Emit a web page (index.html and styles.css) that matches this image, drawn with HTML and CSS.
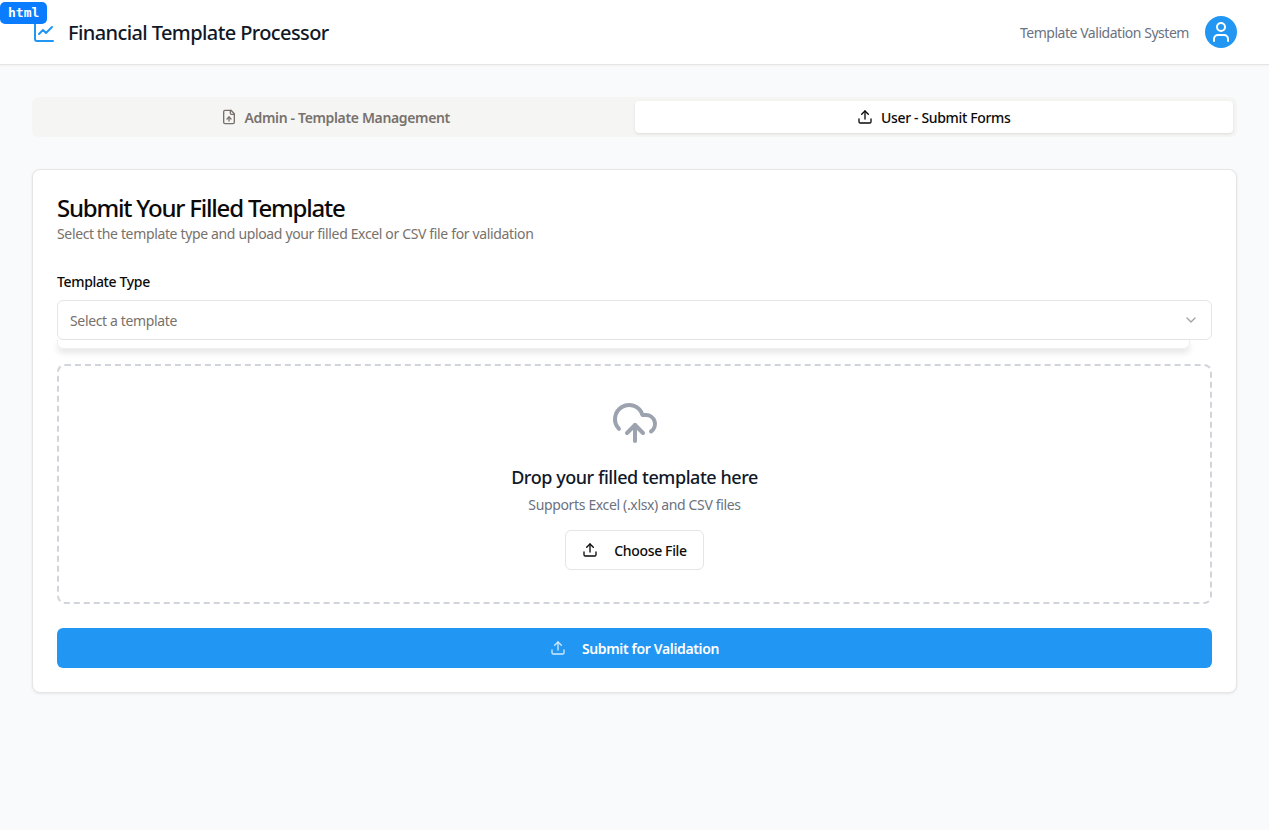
FILE: index.html
```html
<!DOCTYPE html>
<html lang="en">
<head>
  <meta charset="UTF-8" />
  <meta name="viewport" content="width=device-width, initial-scale=1" />
  <title>Financial Template Processor</title>
  <link rel="stylesheet" href="styles.css">
</head>
<body>
  <!-- Element badge left over the logo -->
  <div class="badge">html</div>

  <header class="topbar">
    <div class="brand">
      <svg class="brand-icon" viewBox="0 0 24 24" fill="none" stroke="currentColor" stroke-width="2" stroke-linecap="round" stroke-linejoin="round">
        <path d="M3 3v16a2 2 0 0 0 2 2h16"/>
        <path d="m7 14 4-4 3 3 6-6"/>
      </svg>
      <h1 class="brand-title">Financial Template Processor</h1>
    </div>
    <div class="topbar-right">
      <span class="system-name">Template Validation System</span>
      <div class="avatar">
        <svg viewBox="0 0 24 24" fill="none" stroke="currentColor" stroke-width="2" stroke-linecap="round" stroke-linejoin="round">
          <path d="M19 21v-2a4 4 0 0 0-4-4H9a4 4 0 0 0-4 4v2"/>
          <circle cx="12" cy="7" r="4"/>
        </svg>
      </div>
    </div>
  </header>

  <main class="content">
    <!-- Tabs -->
    <div class="tabs">
      <button class="tab">
        <svg class="icon" viewBox="0 0 24 24" fill="none" stroke="currentColor" stroke-width="2" stroke-linecap="round" stroke-linejoin="round">
          <path d="M15 2H6a2 2 0 0 0-2 2v16a2 2 0 0 0 2 2h12a2 2 0 0 0 2-2V7Z"/>
          <path d="M14 2v4a2 2 0 0 0 2 2h4"/>
          <path d="M12 12v6"/>
          <path d="m15 15-3-3-3 3"/>
        </svg>
        Admin - Template Management
      </button>
      <button class="tab tab-active">
        <svg class="icon" viewBox="0 0 24 24" fill="none" stroke="currentColor" stroke-width="2" stroke-linecap="round" stroke-linejoin="round">
          <path d="M21 15v4a2 2 0 0 1-2 2H5a2 2 0 0 1-2-2v-4"/>
          <path d="m17 8-5-5-5 5"/>
          <path d="M12 3v12"/>
        </svg>
        User - Submit Forms
      </button>
    </div>

    <!-- Submit card -->
    <section class="card">
      <h2 class="card-title">Submit Your Filled Template</h2>
      <p class="card-sub">Select the template type and upload your filled Excel or CSV file for validation</p>

      <label class="field-label">Template Type</label>
      <div class="select">
        <span>Select a template</span>
        <svg class="chevron" viewBox="0 0 24 24" fill="none" stroke="currentColor" stroke-width="2" stroke-linecap="round" stroke-linejoin="round">
          <path d="m6 9 6 6 6-6"/>
        </svg>
      </div>
      <div class="select-menu"></div>

      <div class="dropzone">
        <svg class="cloud" viewBox="0 0 24 24" fill="none" stroke="currentColor" stroke-width="2" stroke-linecap="round" stroke-linejoin="round">
          <path d="M12 13v8"/>
          <path d="M4 14.899A7 7 0 1 1 15.71 8h1.79a4.5 4.5 0 0 1 2.5 8.242"/>
          <path d="m8 17 4-4 4 4"/>
        </svg>
        <h3 class="drop-title">Drop your filled template here</h3>
        <p class="drop-sub">Supports Excel (.xlsx) and CSV files</p>
        <button class="choose-btn">
          <svg class="icon" viewBox="0 0 24 24" fill="none" stroke="currentColor" stroke-width="2" stroke-linecap="round" stroke-linejoin="round">
            <path d="M21 15v4a2 2 0 0 1-2 2H5a2 2 0 0 1-2-2v-4"/>
            <path d="m17 8-5-5-5 5"/>
            <path d="M12 3v12"/>
          </svg>
          Choose File
        </button>
      </div>

      <button class="submit-btn">
        <svg class="icon" viewBox="0 0 24 24" fill="none" stroke="currentColor" stroke-width="2" stroke-linecap="round" stroke-linejoin="round">
          <path d="M21 15v4a2 2 0 0 1-2 2H5a2 2 0 0 1-2-2v-4"/>
          <path d="m17 8-5-5-5 5"/>
          <path d="M12 3v12"/>
        </svg>
        Submit for Validation
      </button>
    </section>
  </main>
</body>
</html>
```

FILE: styles.css
```css
/* Basic resets */
* {
  box-sizing: border-box;
  letter-spacing: -0.025em; /* brings the wide sans down to the reference widths */
}
html, body {
  margin: 0;
  padding: 0;
  height: 100%;
}
body {
  background: #f9fafb;
  font-family: "Noto Sans", sans-serif;
  color: #111827;
  overflow: hidden;
}
button {
  font-family: inherit;
  cursor: pointer;
}
h1, h2, h3, p {
  margin: 0;
}

/* Badge over the logo */
.badge {
  position: absolute;
  top: 2px;
  left: 0;
  z-index: 20;
  height: 22px;
  padding: 0 8px;
  background: #0a7cff;
  color: #fff;
  font-family: "DejaVu Sans Mono", monospace;
  font-size: 13px;
  font-weight: 700;
  letter-spacing: 0;
  line-height: 21px;
  border-radius: 5px;
}

/* Top bar */
.topbar {
  height: 65px;
  padding: 0 32px;
  display: flex;
  align-items: center;
  justify-content: space-between;
  background: #fff;
  border-bottom: 1px solid #e7e5e4;
  box-shadow: 0 1px 2px rgba(0, 0, 0, 0.04);
}
.brand {
  display: flex;
  align-items: center;
  gap: 12px;
}
.brand-icon {
  width: 24px;
  height: 24px;
  color: #2196f3;
}
.brand-title {
  font-size: 20px;
  font-weight: 500;
  letter-spacing: -0.03em;
  color: #111827;
}
.topbar-right {
  display: flex;
  align-items: center;
  gap: 16px;
}
.system-name {
  font-size: 14px;
  letter-spacing: -0.033em;
  color: #6b7280;
}
.avatar {
  width: 32px;
  height: 32px;
  border-radius: 50%;
  background: #2196f3;
  color: #fff;
  display: flex;
  align-items: center;
  justify-content: center;
}
.avatar svg {
  width: 24px;
  height: 24px;
}

/* Main content */
.content {
  padding: 32px;
}

/* Tabs */
.tabs {
  height: 40px;
  padding: 4px;
  margin-bottom: 32px;
  display: grid;
  grid-template-columns: 1fr 1fr;
  background: #f5f5f4;
  border-radius: 6px;
}
.tab {
  display: flex;
  align-items: center;
  justify-content: center;
  gap: 8px;
  padding-bottom: 1px;
  border: none;
  border-radius: 4px;
  background: transparent;
  color: #78716c;
  font-size: 14px;
  font-weight: 600;
}
.tab-active {
  background: #fff;
  color: #0c0a09;
  font-weight: 500;
  box-shadow: 0 1px 3px rgba(0, 0, 0, 0.1);
}
.icon {
  width: 16px;
  height: 16px;
  flex-shrink: 0;
}

/* Card */
.card {
  height: 524px;
  padding: 24px;
  background: #fff;
  border: 1px solid #e7e5e4;
  border-radius: 8px;
  box-shadow: 0 1px 3px rgba(0, 0, 0, 0.08);
}
.card-title {
  font-size: 24px;
  font-weight: 500;
  letter-spacing: -0.05em;
  line-height: 28px;
  color: #0c0a09;
}
.card-sub {
  margin-top: 2px;
  font-size: 14px;
  line-height: 20px;
  color: #78716c;
}
.field-label {
  display: block;
  margin-top: 28px;
  font-size: 14px;
  font-weight: 500;
  line-height: 20px;
  color: #0c0a09;
}
.select {
  height: 40px;
  margin-top: 8px;
  padding: 0 12px;
  display: flex;
  align-items: center;
  justify-content: space-between;
  border: 1px solid #e7e5e4;
  border-radius: 6px;
  font-size: 14px;
  color: #78716c;
}
.chevron {
  width: 16px;
  height: 16px;
  color: #a8a29e;
}
.select-menu {
  height: 9px;
  margin-right: 22px;
  border: 1px solid #f0efee;
  border-top: none;
  border-radius: 0 0 6px 6px;
  box-shadow: 0 4px 6px rgba(0, 0, 0, 0.1);
}

/* Drop zone */
.dropzone {
  height: 240px;
  margin-top: 15px;
  padding-top: 33px;
  display: flex;
  flex-direction: column;
  align-items: center;
  border: 2px dashed #d1d5db;
  border-radius: 8px;
}
.cloud {
  width: 48px;
  height: 48px;
  color: #9ca3af;
}
.drop-title {
  margin-top: 17px;
  font-size: 18px;
  font-weight: 500;
  line-height: 26px;
  color: #111827;
}
.drop-sub {
  margin-top: 5px;
  font-size: 14px;
  line-height: 20px;
  color: #6b7280;
}
.choose-btn {
  height: 40px;
  margin-top: 15px;
  padding: 0 16px;
  display: flex;
  align-items: center;
  gap: 16px;
  background: #fff;
  border: 1px solid #e7e5e4;
  border-radius: 6px;
  font-size: 14px;
  font-weight: 500;
  color: #0c0a09;
}

/* Submit */
.submit-btn {
  width: 100%;
  height: 40px;
  margin-top: 24px;
  display: flex;
  align-items: center;
  justify-content: center;
  gap: 16px;
  background: #2196f3;
  border: none;
  border-radius: 6px;
  color: #fff;
  font-size: 14px;
  font-weight: 600;
}
.submit-btn .icon {
  opacity: 0.8;
}
```
